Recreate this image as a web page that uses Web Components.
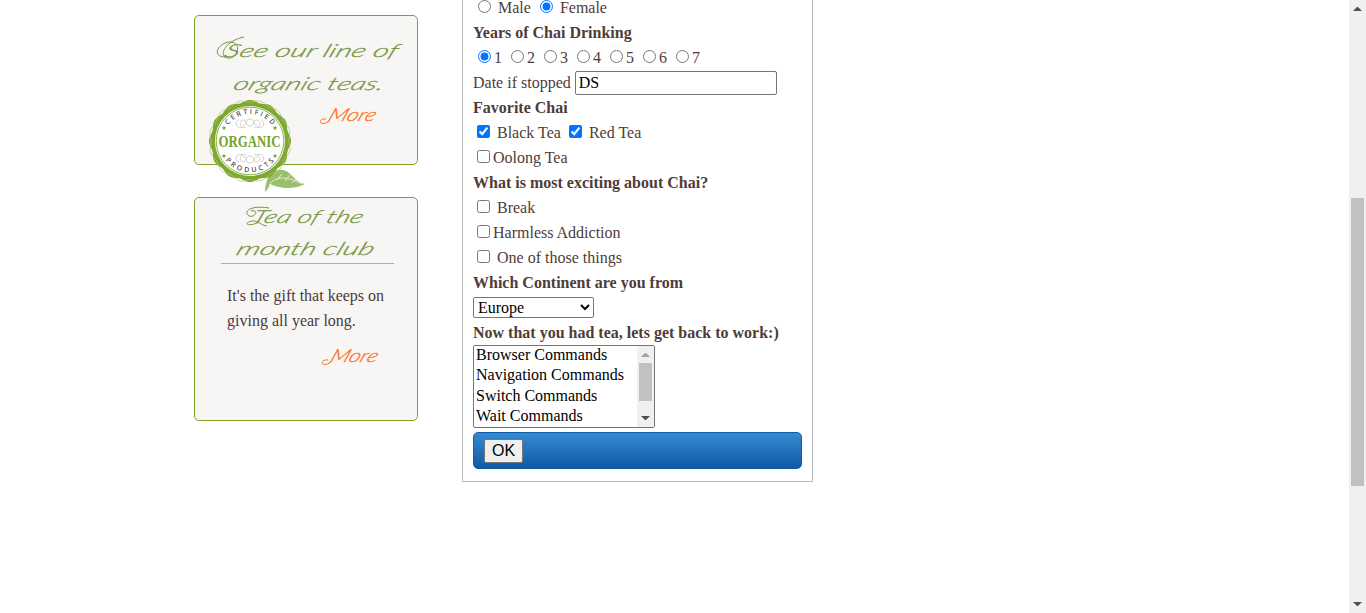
<!DOCTYPE html>
<html lang="en"><head><meta charset="utf-8"><title>Tea</title>
<style>html,body{margin:0;height:100%;overflow:hidden;background:#fff;font:16px/25px "Liberation Serif",serif;color:#4f3c38}</style></head>
<body><tea-page></tea-page>
<script>
const define=(name,html,setup)=>customElements.define(name,class extends HTMLElement{
  connectedCallback(){
    if(this.shadowRoot)return;
    const t=document.createElement('template');t.innerHTML=typeof html==='function'?html(this):html;
    this.attachShadow({mode:'open'}).append(t.content.cloneNode(true));
    if(setup)setup(this);
  }
});
// One line of slanted script lettering, with an optional flourish stroke.
define('script-line',e=>{
  const a=n=>e.getAttribute(n);
  return `<style>:host{display:block;height:${a('h')}px}svg{display:block;overflow:visible}text{font-family:Lato,sans-serif;font-style:italic;font-weight:300;font-size:${a('size')||18}px;fill:var(--ink);stroke:var(--ink);stroke-width:.25px}path{fill:none;stroke:var(--ink);stroke-width:1}</style>
  <svg width="222" height="${a('h')}"><text transform="translate(${a('x')} ${a('y')}) skewX(-22)" textLength="${a('w')}" lengthAdjust="spacingAndGlyphs">${a('text')}</text>${a('swash')?`<path d="${a('swash')}"/>`:''}</svg>`});
define('tea-card',`<style>:host{display:block;box-sizing:border-box;width:224px;background:#f7f6f5;border:1px solid #7ba428;border-radius:5px;--ink:#76953f;position:relative}</style><slot></slot>`);
define('organic-seal',()=>{
  let d='';
  for(let i=0;i<=144;i++){const t=i/144*Math.PI*2,r=40+1.1*Math.cos(12*t);d+=(i?'L':'M')+(42+r*Math.cos(t)).toFixed(1)+' '+(42+r*Math.sin(t)).toFixed(1)}
  const curls='<path d="M0 2c-5 0-5-7 0-7s5 7 0 7M-4 3c-6 2-8-6-3-7 4 0 4 5 0 5M4 3c6 2 8-6 3-7-4 0-4 5 0 5M-7 3c-7 3-9-6-4-7M7 3c7 3 9-6 4-7"/>';
  return `<style>:host{position:absolute;left:13px;top:83px;width:98px;height:96px}svg{display:block;overflow:visible}text{font-family:"Open Sans",sans-serif;font-weight:600;fill:#555}.o{font:bold 17px "Liberation Serif",serif;fill:#76a22d}</style>
  <svg width="98" height="96"><path d="M57 93c0-14 7-24 18-22 9 2 11 12 22 14-16 8-31 2-35 0-1 3-2 5-5 8z" fill="#9bc06d"/><path d="M61 86c5-8 17-10 33-1M69 81l5-6m3 7 5-6m2 8 4-4" fill="none" stroke="#e3edcf"/>
  <path d="${d}Z" fill="#7fa832"/><path d="${d}Z" fill="none" stroke="#a9c875" stroke-width=".7" transform="rotate(14 42 42)"/>
  <circle cx="42" cy="42" r="35" fill="#fff"/><circle cx="42" cy="42" r="33.8" fill="none" stroke="#8db447"/>
  <g fill="none" stroke="#cbcbc0" stroke-width=".9"><g transform="translate(42 25)">${curls}</g><g transform="translate(42 59) scale(1 -1)">${curls}</g></g>
  <defs><path id="top" d="M19.5 27A27 27 0 0 1 64.5 27"/><path id="bot" d="M14 56A31.3 31.3 0 0 0 70 56"/><path id="star" d="M0-2.4.7-.7 2.3-.7 1 .4 1.5 2 0 1-1.5 2-1 .4-2.3-.7-.7-.7z"/></defs>
  <text font-size="7"><textPath href="#top" textLength="51" startOffset="1">CERTIFIED</textPath></text><text font-size="7"><textPath href="#bot" textLength="56" startOffset="6">PRODUCTS</textPath></text>
  <g fill="#76a22d"><use href="#star" x="16" y="29"/><use href="#star" x="67" y="29"/><use href="#star" x="16" y="57"/><use href="#star" x="67" y="57"/></g>
  <text class="o" x="10.5" y="48" textLength="62" lengthAdjust="spacingAndGlyphs">ORGANIC</text></svg>`});
define('form-row',`<style>:host{display:block;height:25px;white-space:nowrap}:host([bold]){font-weight:bold}</style><slot></slot>`);
define('choice-box',e=>`<style>:host{display:inline}input{margin:3px 3px 3px 4px}input[type=radio]{margin:3px 3px 0 5px}</style><input type="${e.getAttribute('type')||'checkbox'}" ${e.hasAttribute('on')?'checked':''}><slot></slot>`);
define('text-entry',e=>`<style>:host{display:inline-block;vertical-align:top;padding-top:1px}input{display:block;box-sizing:border-box;width:202px;height:24px;margin:0;padding:1px 3px;border:1px solid #767676;border-radius:2px;font:16px "Liberation Serif",serif;color:#000}</style><input value="${e.getAttribute('value')}">`);
define('drop-list',`<style>:host{display:block;padding-top:2px}select{display:block;box-sizing:border-box;width:121px;height:21px;margin:0;padding:0;border:1px solid #767676;border-radius:2px;background:#fff;font:16px "Liberation Serif",serif;color:#000}</style><select><option>Europe</option></select>`);
define('scroll-bar',e=>{const n=e.getAttribute('size'),s=e.getAttribute('start'),k=e.getAttribute('thumb');
 return `<style>:host{display:flex;flex-direction:column;box-sizing:border-box;width:${n}px;background:#f0f0f0;align-items:center}i{display:block;width:13px;background:#c1c1c1;height:${k}px;margin-bottom:auto}svg{display:block;flex:none}.u{height:${s}px}</style><svg class="u" width="9"><path d="M4 ${e.getAttribute('up')}h1l4 4h-9z" fill="${e.hasAttribute('dim')?'#a3a3a3':'#505050'}"/></svg><i></i><svg width="9" height="12"><path d="M0 1h9l-4 4h-1z" fill="#505050"/></svg>`});
define('command-list',`<style>:host{display:flex;box-sizing:border-box;width:182px;height:83px;border:1px solid #767676;border-radius:2px;color:#000;line-height:20.25px;overflow:hidden}.l{flex:1;padding-left:2px;margin-top:-1px;white-space:nowrap}</style><div class="l"><slot></slot></div><scroll-bar size="17" start="17" thumb="38" up="7" dim></scroll-bar>`);
define('submit-bar',`<style>:host{display:flex;align-items:center;box-sizing:border-box;height:37px;margin-top:4px;padding-left:10px;border:1px solid #145ba5;border-radius:5px;background:linear-gradient(#348bd2,#115aa5)}button{box-sizing:border-box;width:39px;height:24px;margin:1px 0 0;padding:0;border:1px solid #767676;border-radius:2px;background:#efefef;color:#000;font:16px/20px "Liberation Sans",sans-serif}</style><button><slot></slot></button>`);
define('chai-form',`<style>:host{display:block;box-sizing:border-box;width:351px;height:482px;border:1px solid #bbb;border-top:0;padding:0 10px}.in{margin-top:-5px}</style><div class="in"><slot></slot></div>`);
define('tea-page',`<style>:host{display:flex;height:613px;justify-content:space-between}.main{display:grid;grid-template-columns:224px 351px;gap:44px;padding-left:194px;align-items:start}.side{display:flex;flex-direction:column;gap:32px;padding-top:15px}.a{height:150px;z-index:1}.b{height:224px}hr{border:0;height:1px;background:#a8ba83;width:173px;margin:0 0 0 26px}p{margin:19px 0 1px 32px;width:170px;white-space:nowrap;color:#4b3a38}.more{--ink:#ff6a13}</style>
<div class="main"><div class="side">
<tea-card class="a"><script-line h="60" x="28" y="41" w="173" text="See our line of" swash="M31 41C14 41 25 25 36 26C47 27 43 43 33 42C23 41 29 25 49 21"></script-line><script-line h="23" x="37" y="14" w="150" text="organic teas."></script-line><script-line class="more" h="60" x="132" y="22" w="47" text="More" swash="M134 22C124 29 122 19 131 20"></script-line><organic-seal></organic-seal></tea-card>
<tea-card class="b"><script-line h="33" x="56" y="25" w="110" text="Tea of the" swash="M74 10C57 7 47 13 54 18C61 20 64 11 56 13M62 25C52 29 48 25 57 23C62 22 67 28 72 28"></script-line><script-line h="32" x="40" y="24" w="137" text="month club"></script-line><hr><p>It's the gift that keeps on<br>giving all year long.</p><script-line class="more" h="40" x="134" y="28" w="47" text="More" swash="M136 28C126 35 124 25 133 26"></script-line></tea-card>
</div><chai-form>
<form-row><choice-box type="radio"> Male</choice-box> <choice-box type="radio" on> Female</choice-box></form-row>
<form-row bold>Years of Chai Drinking</form-row>
<form-row><choice-box type="radio" on>1</choice-box> <choice-box type="radio">2</choice-box> <choice-box type="radio">3</choice-box> <choice-box type="radio">4</choice-box> <choice-box type="radio">5</choice-box> <choice-box type="radio">6</choice-box> <choice-box type="radio">7</choice-box></form-row>
<form-row>Date if stopped <text-entry value="DS"></text-entry></form-row>
<form-row bold>Favorite Chai</form-row>
<form-row><choice-box on> Black Tea</choice-box> <choice-box on> Red Tea</choice-box></form-row>
<form-row><choice-box>Oolong Tea</choice-box></form-row>
<form-row bold>What is most exciting about Chai?</form-row>
<form-row><choice-box> Break</choice-box></form-row>
<form-row><choice-box>Harmless Addiction</choice-box></form-row>
<form-row><choice-box> One of those things</choice-box></form-row>
<form-row bold>Which Continent are you from</form-row>
<form-row><drop-list></drop-list></form-row>
<form-row bold>Now that you had tea, lets get back to work:)</form-row>
<command-list><div>Browser Commands</div><div>Navigation Commands</div><div>Switch Commands</div><div>Wait Commands</div></command-list>
<submit-bar>OK</submit-bar>
</chai-form></div><scroll-bar size="17" start="198" thumb="288" up="7"></scroll-bar>`);
</script></body></html>
